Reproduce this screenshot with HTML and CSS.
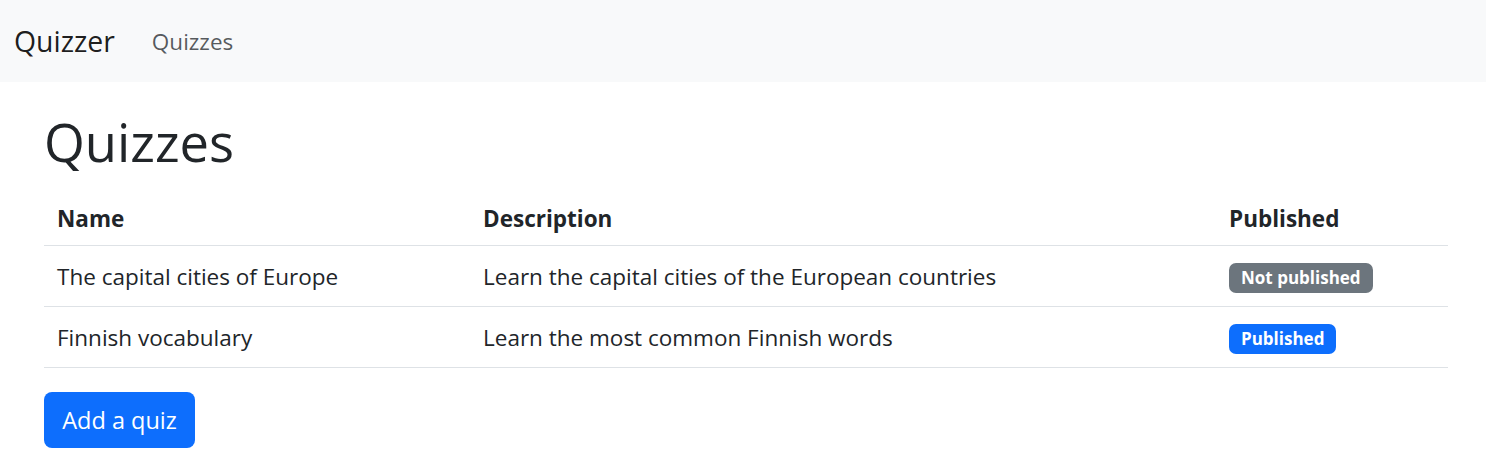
FILE: index.html
```html
<!DOCTYPE html>
<html lang="en">
<head>
<meta charset="utf-8">
<title>Quizzer</title>
<link rel="stylesheet" href="styles.css">
</head>
<body>
<nav class="navbar">
  <a class="brand" href="#">Quizzer</a>
  <a class="nav-link" href="#">Quizzes</a>
</nav>
<main class="container">
  <h1 class="title">Quizzes</h1>
  <table class="table">
    <thead>
      <tr><th class="c1">Name</th><th class="c2">Description</th><th class="c3">Published</th></tr>
    </thead>
    <tbody>
      <tr><td>The capital cities of Europe</td><td>Learn the capital cities of the European countries</td><td><span class="badge badge-grey">Not published</span></td></tr>
      <tr><td>Finnish vocabulary</td><td>Learn the most common Finnish words</td><td><span class="badge badge-blue">Published</span></td></tr>
    </tbody>
  </table>
  <button class="btn" type="button">Add a quiz</button>
</main>
</body>
</html>
```
FILE: styles.css
```css
* { box-sizing: border-box; }
body {
  margin: 0;
  font-family: "Open Sans", "Noto Sans", "Liberation Sans", sans-serif;
  font-size: 22.5px;
  color: #212529;
  background: #fff;
}
.navbar {
  height: 82px;
  background: #f8f9fa;
  display: flex;
  align-items: center;
  padding: 0 14px;
}
.brand {
  font-size: 28.4px;
  color: rgba(0,0,0,.9);
  text-decoration: none;
  margin-right: 37px;
}
.nav-link {
  font-size: 22.5px;
  color: rgba(33,37,41,.75);
  text-decoration: none;
}
.container {
  padding: 28px 38px 0 44px;
}
.title {
  font-size: 52.5px;
  font-weight: 400;
  margin: 0 0 19px;
  line-height: 63px;
}
.table {
  width: 100%;
  border-collapse: collapse;
  margin-bottom: 24px;
}
.table th, .table td {
  text-align: left;
  padding: 1px 13px 0;
  height: 61px;
  border-bottom: 1px solid #dee2e6;
  vertical-align: middle;
}
.table th { font-weight: 700; height: 53px; }
.c1 { width: 426px; }
.c3 { width: 232px; }
.badge {
  display: inline-block;
  font-size: 17px;
  font-weight: 700;
  color: #fff;
  padding: 4px 12px;
  border-radius: 7px;
  line-height: 22px;
}
.badge-grey { background: #6c757d; }
.badge-blue { background: #0d6efd; }
.btn {
  font-family: inherit;
  font-size: 23.5px;
  color: #fff;
  background: #0d6efd;
  border: 0;
  border-radius: 8px;
  height: 56px;
  width: 151px;
  padding: 0;
}
```
